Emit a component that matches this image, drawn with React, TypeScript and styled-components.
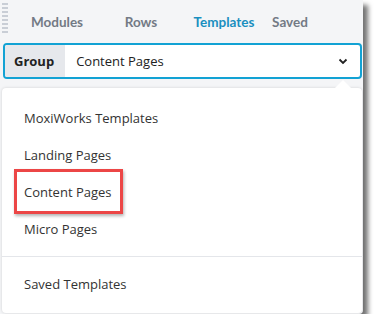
import React from "react";
import styled, { createGlobalStyle } from "styled-components";

const GlobalStyle = createGlobalStyle`
  body {
    margin: 0;
    background: #ffffff;
    font-family: "Open Sans", "Noto Sans", sans-serif;
  }
`;

const Panel = styled.div`
  position: relative;
  width: 363px;
  height: 314px;
  background: #f4f5f7;
  border-radius: 0 0 4px 0;
  box-shadow: 5px 5px 5px rgba(0, 0, 0, 0.55);
`;

const TabBar = styled.div`
  display: grid;
  grid-template-columns: 12px 90px 78px 88px 44px;
  align-items: center;
  height: 42px;
`;

const Grip = styled.div`
  display: flex;
  flex-direction: column;
  gap: 2px;
  align-self: start;
  padding: 3px 0 0 2px;
  span {
    display: block;
    width: 6px;
    height: 2px;
    background: #c9ced6;
  }
`;

const Tab = styled.div<{ $active?: boolean }>`
  text-align: center;
  font-family: Lato, "Open Sans", sans-serif;
  font-size: 13.5px;
  font-weight: 700;
  padding-top: 1px;
  color: ${(p) => (p.$active ? "#1a8fbf" : "#737a85")};
`;

const Select = styled.div`
  display: flex;
  align-items: stretch;
  margin: 1px 0 0 3px;
  width: 359px;
  height: 36px;
  box-sizing: border-box;
  border: 2px solid #12a2d4;
  border-radius: 4px;
  background: #ffffff;
  overflow: hidden;
`;

const Label = styled.div`
  display: flex;
  align-items: center;
  padding: 0 11px 0 9px;
  background: #e6e8ec;
  font-size: 13px;
  font-weight: 700;
  color: #222;
`;

const Value = styled.div`
  flex: 1;
  display: flex;
  align-items: center;
  justify-content: space-between;
  padding: 0 12px 0 11px;
  font-size: 13px;
  color: #222;
`;

const Menu = styled.div`
  position: absolute;
  left: 2px;
  top: 88px;
  width: 360px;
  padding: 11px 0;
  box-sizing: border-box;
  background: #ffffff;
  border-radius: 4px;
  box-shadow: 0 0 3px rgba(0, 0, 0, 0.15);
  &::before {
    content: "";
    position: absolute;
    top: -8px;
    right: 11px;
    border: 8px solid transparent;
    border-top: 0;
    border-bottom-color: #ffffff;
  }
`;

const Item = styled.div<{ $marked?: boolean }>`
  position: relative;
  display: flex;
  align-items: center;
  height: 37px;
  padding-left: 22px;
  font-size: 13px;
  color: #333;
  span {
    position: relative;
  }
  ${(p) =>
    p.$marked &&
    `
    span::after {
      content: "";
      position: absolute;
      left: -10px;
      right: -11px;
      top: -14px;
      bottom: -13px;
      border: 3px solid #ec4646;
      box-shadow: 1px 2px 3px rgba(0, 0, 0, 0.3);
    }
  `}
`;

const Divider = styled.div`
  height: 1px;
  margin: 9px 0 8px;
  background: #e4e6ea;
`;

const Chevron = () => (
  <svg width="10" height="7" viewBox="0 0 10 7">
    <path d="M1.5 1.5 L5 5 L8.5 1.5" fill="none" stroke="#222" strokeWidth="1.8" />
  </svg>
);

const groups = ["MoxiWorks Templates", "Landing Pages", "Content Pages", "Micro Pages"];

const App = () => {
  return (
    <>
      <GlobalStyle />
      <Panel>
        <TabBar>
          <Grip>
            {Array.from({ length: 8 }).map((_, i) => (
              <span key={i} />
            ))}
          </Grip>
          <Tab>Modules</Tab>
          <Tab>Rows</Tab>
          <Tab $active>Templates</Tab>
          <Tab>Saved</Tab>
        </TabBar>
        <Select>
          <Label>Group</Label>
          <Value>
            Content Pages
            <Chevron />
          </Value>
        </Select>
        <Menu>
          {groups.map((g) => (
            <Item key={g} $marked={g === "Content Pages"}>
              <span>{g}</span>
            </Item>
          ))}
          <Divider />
          <Item>
            <span>Saved Templates</span>
          </Item>
        </Menu>
      </Panel>
    </>
  );
};

export default App;
